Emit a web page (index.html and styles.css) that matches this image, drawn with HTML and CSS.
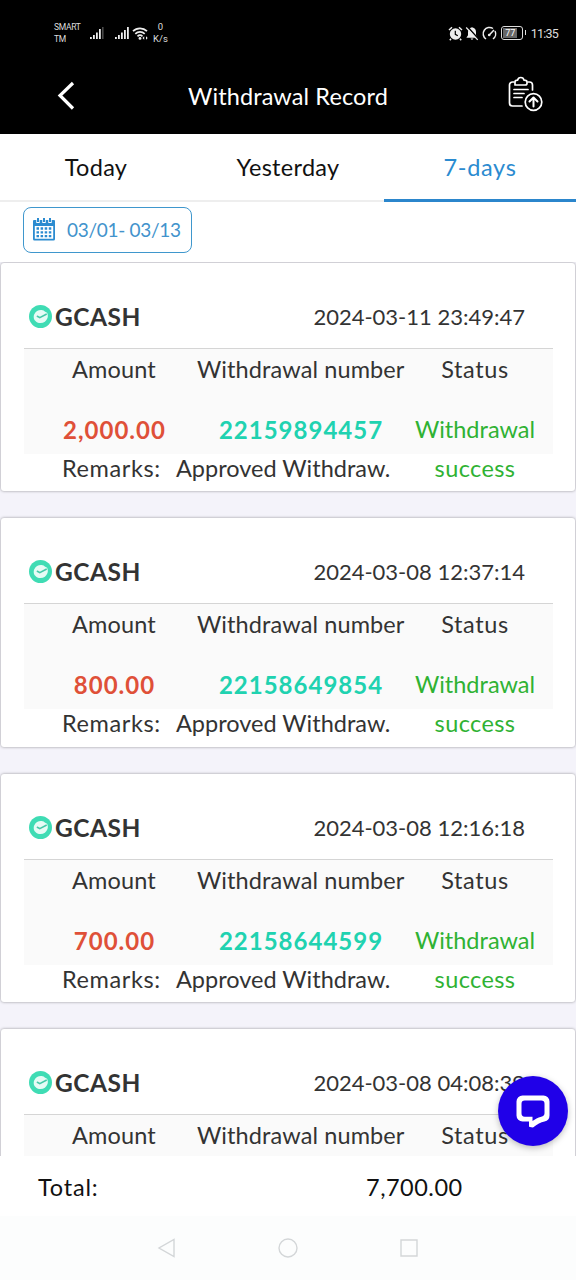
FILE: index.html
```html
<!DOCTYPE html>
<html lang="en">
<head>
<meta charset="utf-8">
<title>Withdrawal Record</title>
<link rel="stylesheet" href="styles.css">
</head>
<body>
<svg class="defs" width="0" height="0">
  <symbol id="gcash" viewBox="0 0 22 22">
    <circle cx="11" cy="11" r="11" fill="#3fdcb4"/>
    <path d="M5.200 8.500C6.500 5.800 9 4.500 12 4.700c1.500.1 2.700.8 3.500 1.800l1.800.8c.8 1.500 1 3.500.4 5.200-1 3-3.500 4.800-6.700 4.800-2.200 0-4-.9-5-2.300-1.500-1-2-4.500-.8-6.500z" fill="#e6fbf5"/>
    <path d="M8 10.800l2.300 1.300 6.200-3.300" fill="none" stroke="#45c9a8" stroke-width="1.500" stroke-linecap="round"/>
  </symbol>
</svg>
<div class="screen">
  <header class="top">
    <div class="status-bar">
      <div class="carrier"><span>SMART</span><span>TM</span></div>
      <svg class="signal-a" width="14" height="14" viewBox="0 0 14 14"><g fill="#eee"><path d="M0 11h1.800v2H0zM3 9h1.800v4H3zM6 6.500h1.800V13H6zM9 3h1.800v10H9z"/><path d="M12 1h1.600v12H12z" opacity=".3"/></g></svg>
      <svg class="signal-b" width="14" height="14" viewBox="0 0 14 14"><path fill="#eee" d="M0 11h1.800v2H0zM3 9h1.800v4H3zM6 6.500h1.800V13H6zM9 4h1.800v9H9zM12 1h1.800v12H12z"/></svg>
      <svg class="wifi" width="17" height="15" viewBox="0 0 17 15"><g fill="none" stroke="#eee" stroke-width="1.700"><path d="M1 5.200a10 10 0 0 1 14 0M3.300 7.900a6.700 6.700 0 0 1 9.400 0M5.500 10.400a3.600 3.600 0 0 1 5 0"/></g><circle cx="8" cy="12.400" r="1.400" fill="#eee"/><path d="M10.500 12l1.700-1.800v3.600zM15.700 12L14 10.200v3.600z" fill="#eee"/></svg>
      <div class="speed"><span>0</span><span>K/s</span></div>
      <div class="system">
        <svg width="15" height="15" viewBox="0 0 15 15"><circle cx="7.500" cy="8" r="5.700" fill="#eee"/><path d="M7.300 4.800v3.500l2.500 1.400" fill="none" stroke="#000" stroke-width="1.200"/><path d="M1 4L4 1.300M14 4l-3-2.700M3 12.800l-1.200 1.400M12 12.800l1.200 1.400" stroke="#eee" stroke-width="1.500"/></svg>
        <svg width="14" height="15" viewBox="0 0 14 15"><path d="M7 1.300c3 .5 4 2.500 4 5v3l1.600 2.400H1.400L3 9.300v-3c0-2.500 1-4.500 4-5zM5.500 12.500h3L7 14z" fill="#eee"/><path d="M3 1.200l11 12.500" stroke="#000" stroke-width="1.500"/><path d="M1.200 1.500l11.500 12.300" stroke="#eee" stroke-width="1.200"/></svg>
        <svg width="15" height="15" viewBox="0 0 15 15"><path d="M4 13A6.300 6.300 0 1 1 11 2.500M13 5A6.300 6.300 0 0 1 11 13M7 9.200L12 4" fill="none" stroke="#eee" stroke-width="1.500"/><circle cx="7.200" cy="9" r="1.300" fill="#eee"/></svg>
        <div class="battery"><span>77</span></div>
        <span class="clock">11:35</span>
      </div>
    </div>
    <nav class="title-bar">
      <svg class="back" width="20" height="30" viewBox="0 0 20 30"><path d="M18 2L5 14.500l13 13" fill="none" stroke="#fff" stroke-width="3.200"/></svg>
      <h1>Withdrawal Record</h1>
      <svg class="report" width="36" height="36" viewBox="0 0 36 36"><g fill="none" stroke="#fff" stroke-width="1.700" stroke-linejoin="round" stroke-linecap="round"><path d="M7 6H5.500A3 3 0 0 0 2.500 9v18a3 3 0 0 0 3 3H15M21 6h1.500a3 3 0 0 1 3 3v5"/><path d="M8 9V6c0-1.300 1-1.800 2.500-1.800.4-1.600 1.600-2.700 3.300-2.700s2.900 1.100 3.300 2.700c1.600 0 2.900.5 2.900 1.800v1.200c0 1-.7 1.800-1.800 1.800z"/><path d="M7 13.500h14M7 17.500h10M7 21.500h8"/><circle cx="26.500" cy="26" r="8.300"/><path d="M26.500 30.500v-8.500M22.500 25.500l4-4 4 4" stroke-width="2"/></g></svg>
    </nav>
  </header>
  <div class="tabs">
    <div class="tab today">Today</div>
    <div class="tab yesterday">Yesterday</div>
    <div class="tab active">7-days</div>
  </div>
  <div class="filter">
    <button class="range">
      <svg width="22" height="24" viewBox="0 0 22 24"><path fill="#2b8bd0" fill-rule="evenodd" d="M1 3h20a1 1 0 0 1 1 1v18a1.500 1.500 0 0 1-1.500 1.500h-19A1.500 1.500 0 0 1 0 22V4a1 1 0 0 1 1-1zm.8 6v12.700h18.400V9z"/><path d="M5 0v6M11 0v6M17 0v6" stroke="#fff" stroke-width="3.400"/><path d="M5 1v4M11 1v4M17 1v4" stroke="#2b8bd0" stroke-width="2"/><path d="M3.500 11.500h15.500M3.500 15.300h15.500M3.500 19.100h15.500" stroke="#2b8bd0" stroke-width="2.300" stroke-dasharray="2.500 1.600"/></svg>
      <span>03/01- 03/13</span>
    </button>
  </div>
  <main class="records">
    <article class="card">
      <div class="card-head"><svg class="coin"><use href="#gcash"/></svg><b>GCASH</b><time>2024-03-11 23:49:47</time></div>
      <div class="table">
        <div class="th">Amount</div><div class="th th-number">Withdrawal number</div><div class="th th-status">Status</div>
        <div class="amount">2,000.00</div><div class="number">22159894457</div>
        <div class="result">Withdrawal <span>success</span></div>
        <div class="remarks"><span class="label">Remarks:</span><span>Approved Withdraw.</span></div>
      </div>
    </article>
    <article class="card">
      <div class="card-head"><svg class="coin"><use href="#gcash"/></svg><b>GCASH</b><time>2024-03-08 12:37:14</time></div>
      <div class="table">
        <div class="th">Amount</div><div class="th th-number">Withdrawal number</div><div class="th th-status">Status</div>
        <div class="amount">800.00</div><div class="number">22158649854</div>
        <div class="result">Withdrawal <span>success</span></div>
        <div class="remarks"><span class="label">Remarks:</span><span>Approved Withdraw.</span></div>
      </div>
    </article>
    <article class="card">
      <div class="card-head"><svg class="coin"><use href="#gcash"/></svg><b>GCASH</b><time>2024-03-08 12:16:18</time></div>
      <div class="table">
        <div class="th">Amount</div><div class="th th-number">Withdrawal number</div><div class="th th-status">Status</div>
        <div class="amount">700.00</div><div class="number">22158644599</div>
        <div class="result">Withdrawal <span>success</span></div>
        <div class="remarks"><span class="label">Remarks:</span><span>Approved Withdraw.</span></div>
      </div>
    </article>
    <article class="card">
      <div class="card-head"><svg class="coin"><use href="#gcash"/></svg><b>GCASH</b><time>2024-03-08 04:08:39</time></div>
      <div class="table">
        <div class="th">Amount</div><div class="th th-number">Withdrawal number</div><div class="th th-status">Status</div>
      </div>
    </article>
  </main>
  <div class="total"><span class="total-label">Total:</span><span class="total-sum">7,700.00</span></div>
  <div class="system-nav">
    <svg width="22" height="22" viewBox="0 0 22 22"><path d="M18 2.500v17L3 11z"/></svg>
    <svg width="22" height="22" viewBox="0 0 22 22"><circle cx="11" cy="11" r="9"/></svg>
    <svg width="22" height="22" viewBox="0 0 22 22"><path d="M3 3h16v16H3z"/></svg>
  </div>
  <button class="chat"><svg width="34" height="34" viewBox="0 0 34 34"><path d="M6.500 1.500h21a6 6 0 0 1 6 6v14a6 6 0 0 1-5 5.900c-4 .6-7 2.500-11.500 6.100q-4-.5-4-1v-5H6.500a6 6 0 0 1-6-6v-14a6 6 0 0 1 6-6z" fill="#fff"/><path d="M8.800 6.500h16.400a3.300 3.300 0 0 1 3.300 3.300v9.400c0 2-1 3-3.300 3.500-3.500.8-6 2.300-8.700 4.300v-4.300H8.800c-2.300 0-3.300-1.500-3.300-3.500V9.800a3.300 3.300 0 0 1 3.300-3.300z" fill="#2000e8"/></svg></button>
</div>
</body>
</html>
```
FILE: styles.css
```css
* { box-sizing: border-box; }
body { margin: 0; font-family: Lato, sans-serif; font-size: 23.5px; color: #333; }
button { font: inherit; padding: 0; }
svg { display: block; flex: none; }
.defs { position: absolute; }
.screen { position: relative; width: 576px; height: 1280px; display: flex; flex-direction: column; background: #fff; overflow: hidden; }

.top { height: 134px; background: #000; color: #fff; flex: none; }
.status-bar { height: 66px; display: flex; align-items: center; padding: 0 18px 0 54px; color: #ddd; font-family: Roboto, sans-serif; }
.carrier, .speed { display: flex; flex-direction: column; font-size: 8.5px; line-height: 12px; }
.carrier { width: 36px; font-size: 8.5px; letter-spacing: -.3px; }
.speed { margin-left: 4px; align-items: center; font-size: 9.5px; }
.signal-a { margin-right: 11px; }
.signal-b { margin-right: 3px; }
.system { display: flex; align-items: center; margin-left: auto; gap: 2.500px; }
.battery { position: relative; width: 22px; height: 14px; border: 1.500px solid #ddd; border-radius: 3px; padding: 1px; margin: 0 5px 0 2px; }
.battery::after { content: ""; position: absolute; right: -4px; top: 3px; width: 1.500px; height: 5px; background: #ddd; }
.battery span { display: block; width: 14px; height: 10px; background: #666; color: #fff; font-size: 9px; line-height: 10px; text-align: center; }
.clock { font-size: 12.500px; letter-spacing: -.8px; }

.title-bar { height: 60px; display: grid; grid-template-columns: 94px 1fr 94px; align-items: center; }
.back { margin-left: 55px; }
.report { margin-left: 25px; margin-top: -4px; }
.title-bar h1 { margin: 0; font-size: 23.5px; font-weight: 400; text-align: center; letter-spacing: .1px; }

.tabs { height: 68px; display: grid; grid-template-columns: repeat(3, 1fr); flex: none; color: #111; }
.tab { display: flex; align-items: center; justify-content: center; border-bottom: 2px solid #eee; letter-spacing: .3px; }
.tab.active { color: #2b8bd0; border-bottom: 3px solid #2b86cc; letter-spacing: .7px; }

.filter { height: 60px; padding: 5px 23px; flex: none; }
.range { display: flex; align-items: center; width: 169px; height: 46px; border: 1.500px solid #3f97cd; border-radius: 8px; background: #fff; color: #4293cc; padding: 0 0 2px 9px; gap: 12px; font-size: 19px; letter-spacing: -.3px; white-space: nowrap; }

.records { height: 894px; flex: none; display: flex; flex-direction: column; gap: 27px; padding: 1px; overflow: hidden; background: #f4f3fa; }
.card { height: 228.400px; flex: none; background: #fff; border-radius: 3px; padding: 0 22px 0 23px; box-shadow: 0 0 3px rgba(0, 0, 0, .4); }
.card-head { height: 86px; display: flex; align-items: center; border-bottom: 1.500px solid #d5d5d5; padding: 22px 28px 0 5px; }
.coin { width: 23px; height: 23px; margin-right: 3px; }
.card-head b { font-size: 24.500px; letter-spacing: .5px; }
.card-head time { margin-left: auto; font-size: 22px; }
.table { display: grid; grid-template-columns: 180px 193px 156px; grid-template-rows: 43px 61px 38px; background: linear-gradient(#fafafa 105px, #fff 105px); text-align: center; white-space: nowrap; }
.card:last-child .table { grid-template-rows: 43px 61px; }
.th { line-height: 41px; letter-spacing: .15px; }
.th-number { margin: 0 -7px; letter-spacing: .1px; }
.th-status { letter-spacing: .6px; }
.amount, .number { padding-top: 18px; line-height: 39px; font-size: 24px; font-weight: 700; letter-spacing: 1px; }
.amount { padding-left: 1px; color: #df5038; }
.number { padding-left: 1px; color: #20d2b0; }
.result { grid-column: 3; grid-row: 2 / 4; padding-top: 18px; line-height: 39px; color: #2fb233; white-space: normal; }
.result span { letter-spacing: .4px; }
.remarks { grid-column: 1 / 3; grid-row: 3; display: flex; align-items: center; padding-left: 38px; padding-bottom: 8px; }
.remarks .label { width: 114px; text-align: left; letter-spacing: .6px; }

.total { height: 60px; flex: none; display: flex; align-items: center; padding: 2px 0 0 38px; color: #111; }
.total-label { width: 328px; letter-spacing: .8px; }
.total-sum { letter-spacing: .5px; }
.system-nav { height: 64px; display: flex; justify-content: center; align-items: center; gap: 99px; background: #fcfdfd; }
.system-nav svg { fill: none; stroke: #d3d6d8; stroke-width: 1.400; }

.chat { position: absolute; left: 497.500px; top: 1076px; width: 70px; height: 70px; border: 0; border-radius: 50%; background: #2000e8; display: flex; align-items: center; justify-content: center; box-shadow: 0 2px 6px rgba(0, 0, 0, .25); }
```
